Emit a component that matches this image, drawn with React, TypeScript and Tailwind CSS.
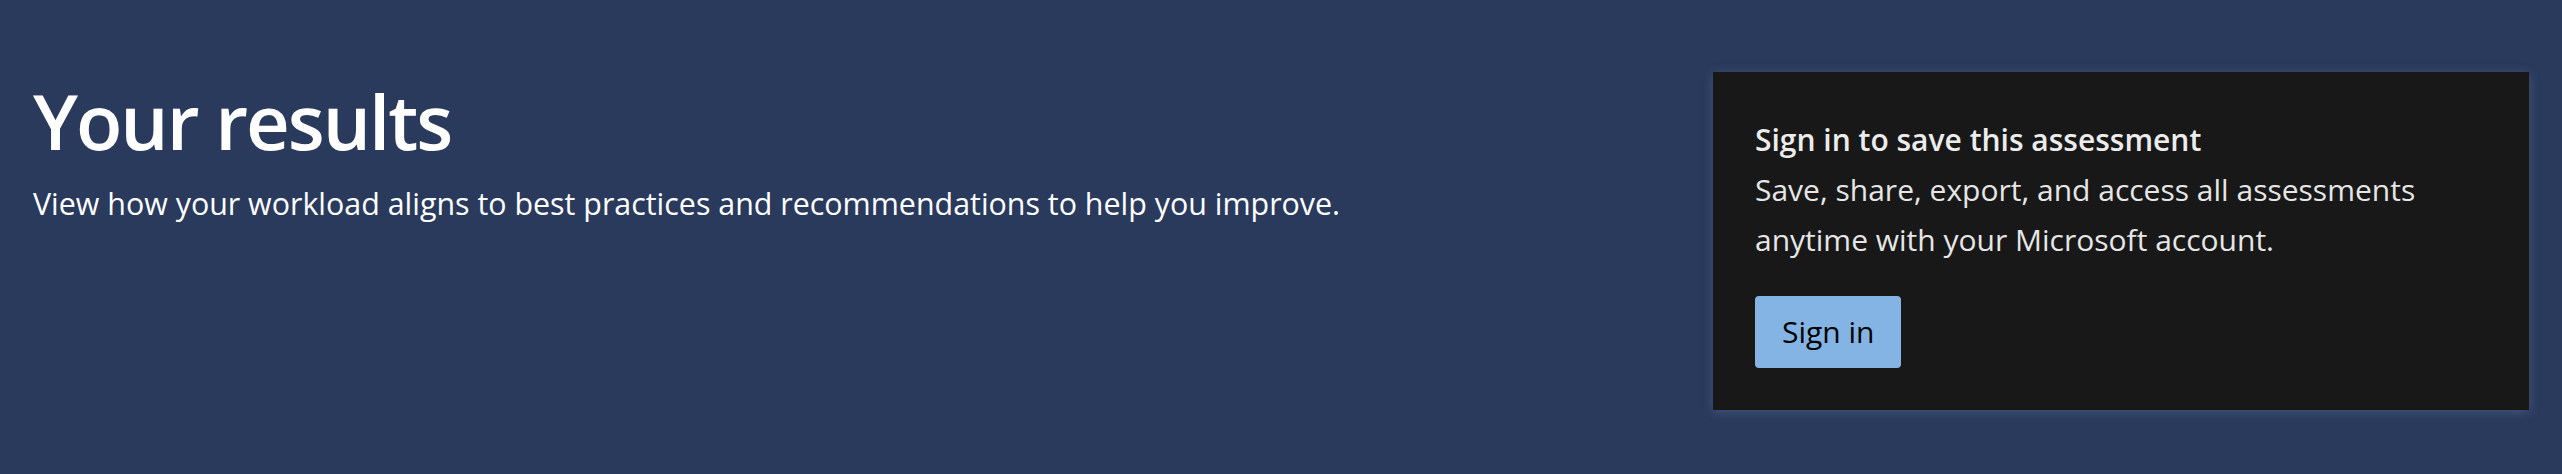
import React from "react";

export default function App() {
  return (
    <div
      className="flex min-h-[474px] w-full items-start justify-between bg-[#2a3a5c] px-[33px]"
      style={{ fontFamily: '"Open Sans", "Noto Sans", sans-serif' }}
    >
      <div className="pt-[71px]">
        <h1 className="text-[76px] font-semibold leading-[100px] tracking-[-2px] text-white">Your results</h1>
        <p className="mt-[8px] text-[30.4px] leading-[50px] text-white">
          View how your workload aligns to best practices and recommendations to help you improve.
        </p>
      </div>

      <div className="mt-[72px] w-[816px] shrink-0 bg-[#181818] px-[42px] pb-[42px] pt-[43px] shadow-[0_2px_10px_rgba(120,140,180,0.35)]">
        <h2 className="text-[30px] font-semibold leading-[50px] text-[#ececec]">Sign in to save this assessment</h2>
        <p className="text-[30px] leading-[50px] text-[#e6e6e6]">
          Save, share, export, and access all assessments anytime with your Microsoft account.
        </p>
        <button className="mt-[31px] h-[72px] rounded-[4px] bg-[#84b4e4] px-[27px] text-[30px] leading-[50px] text-black">
          Sign in
        </button>
      </div>
    </div>
  );
}
